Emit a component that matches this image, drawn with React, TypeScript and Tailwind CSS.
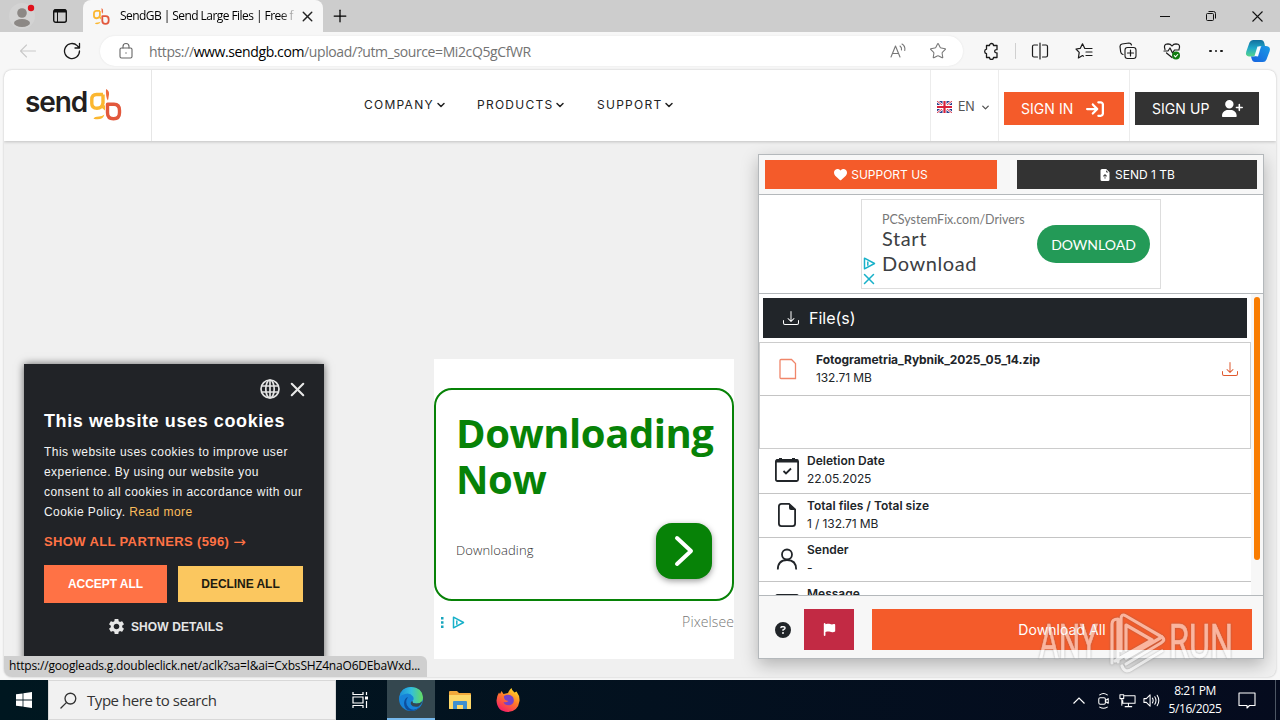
import type { ReactNode } from "react";
import { FaArrowRightToBracket, FaCircleQuestion, FaFlag, FaHeart, FaUserPlus } from "react-icons/fa6";
import { BsDownload, BsFileEarmarkArrowUpFill } from "react-icons/bs";
import { MdSettings } from "react-icons/md";
import { ChevronDown, Plus, Star, X } from "lucide-react";

const navItems = [
  { label: "COMPANY", width: "w-[113px]" },
  { label: "PRODUCTS", width: "w-[120px]" },
  { label: "SUPPORT", width: "w-[90px]" },
];

function LineIcon({ size = 18, className = "", children }: { size?: number; className?: string; children: ReactNode }) {
  return (
    <svg
      width={size}
      height={size}
      viewBox="0 0 18 18"
      fill="none"
      stroke="currentColor"
      strokeWidth="1.1"
      strokeLinecap="round"
      strokeLinejoin="round"
      className={`shrink-0 ${className}`}
    >
      {children}
    </svg>
  );
}

function DetailIcon({ children }: { children: ReactNode }) {
  return (
    <svg width="26" height="26" viewBox="0 0 26 26" fill="none" stroke="#212529" strokeWidth="1.8">
      {children}
    </svg>
  );
}

const details = [
  {
    icon: (
      <DetailIcon>
        <rect x="1.900" y="3" width="22.200" height="21" rx="1.500" />
        <path d="M2 4h22M6.500 1v4M19.500 1v4" strokeWidth="3" />
        <path d="m9.500 14 2.500 2.500 5-5" />
      </DetailIcon>
    ),
    label: "Deletion Date",
    value: "22.05.2025",
    height: "h-[45px]",
  },
  {
    icon: (
      <DetailIcon>
        <path d="M15 1.900H7.500q-2.600 0-2.600 2.600v17q0 2.600 2.600 2.600h11q2.600 0 2.600-2.600V7.500z" />
        <path d="M15 1.500 21.500 8H17q-2 0-2-2z" fill="#212529" stroke="none" />
      </DetailIcon>
    ),
    label: "Total files / Total size",
    value: "1 / 132.71 MB",
    height: "h-11",
  },
  {
    icon: (
      <DetailIcon>
        <circle cx="13" cy="8.500" r="5" />
        <path d="M3.800 23.500Q3.800 14 13 14t9.200 9.500" />
      </DetailIcon>
    ),
    label: "Sender",
    value: "-",
    height: "h-11",
  },
  {
    icon: (
      <DetailIcon>
        <rect x="1.900" y="5" width="22.200" height="17" rx="1.500" />
      </DetailIcon>
    ),
    label: "Message",
    value: "",
    height: "h-11",
  },
];

function BrandMark({ className }: { className: string }) {
  return (
    <svg viewBox="0 0 32 32" fill="none" strokeWidth="3.4" className={`shrink-0 ${className}`}>
      <path d="M13 5.500H6.500Q1.800 5.500 1.800 10.500v4Q1.800 19.300 7 19.300T13 14V5.500" stroke="#fbb731" strokeLinejoin="round" />
      <path d="M11.500 18.500 15 21.500V16z" fill="#fbb731" />
      <path d="M14.500 25.500Q12.500 32 3.500 29.800 4.500 27.500 9 27.500q3 0 5.500-2z" fill="#fbb731" />
      <path d="M16 0q3.500 1.500 3 5.500L18 11.500q-2.500-3-2-11.500z" fill="#ee6b3f" />
      <path d="M17.500 15.300v8.500q0 6 6 6t6-6v-2.300q0-6.200-5.500-6.200z" stroke="#e2583c" strokeLinejoin="round" />
    </svg>
  );
}

function AdChoices() {
  return (
    <svg width="13" height="13" viewBox="0 0 13 13" fill="none" stroke="#18b1c9" strokeWidth="1.500">
      <path d="M1.500 1.200 11.500 6.500 1.500 11.800Z" strokeLinejoin="round" />
      <path d="M4.800 4.500v4.200" />
    </svg>
  );
}

function TitleBar() {
  return (
    <div className="flex h-8 bg-[#cdcdcd]">
      <div className="flex w-11 items-center justify-center">
        <svg width="28" height="28" viewBox="0 0 28 28">
          <circle cx="14" cy="14" r="13" fill="#d3d3d3" />
          <circle cx="14" cy="11" r="4.800" fill="#8c8885" />
          <ellipse cx="14" cy="21" rx="8" ry="4" fill="#8c8885" />
          <circle cx="23" cy="6" r="3.200" fill="#e0101b" />
        </svg>
      </div>
      <div className="flex w-[39px] items-center pl-2">
        <svg width="16" height="16" viewBox="0 0 16 16" fill="none" stroke="#111">
          <rect x="1.700" y="1.700" width="12.600" height="12.600" rx="2" strokeWidth="1.400" />
          <path d="M2 3h12" strokeWidth="3" />
          <path d="M5.500 4v10" />
        </svg>
      </div>
      <div className="flex w-60 items-center rounded-t-lg bg-[#f7f7f7] pl-[10px]">
        <BrandMark className="h-[17px] w-[17px]" />
        <div className="ml-[10px] w-[174px] bg-linear-to-r from-black from-91% to-[#d0d0d0] bg-clip-text text-[12px] tracking-[-0.560px] whitespace-nowrap text-transparent">
          SendGB | Send Large Files | Free f
        </div>
        <X size={17} strokeWidth={2} className="ml-[5px] shrink-0 text-[#222]" />
      </div>
      <div className="flex w-[34px] items-center justify-center">
        <Plus size={20} strokeWidth={1.500} />
      </div>
      <div className="ml-auto flex text-[#111]">
        <div className="flex w-[46px] items-center justify-center">
          <div className="h-px w-[10px] bg-[#111]" />
        </div>
        <div className="flex w-[46px] items-center justify-center">
          <svg width="10" height="10" viewBox="0 0 10 10" fill="none" stroke="currentColor">
            <rect x=".5" y="2.500" width="7" height="7" rx="1" />
            <path d="M2.500.5h5q2 0 2 2v5" />
          </svg>
        </div>
        <div className="flex w-[46px] items-center justify-center">
          <svg width="11" height="11" viewBox="0 0 11 11" stroke="currentColor" strokeWidth="1.100">
            <path d="M.5.5l10 10M10.500.5l-10 10" />
          </svg>
        </div>
      </div>
    </div>
  );
}

function Toolbar() {
  return (
    <div className="flex h-[38px] items-center bg-[#f7f7f7] text-[#1a1a1a]">
      <div className="flex w-14 justify-center text-[#c9c9c9]">
        <LineIcon>
          <path d="M1.500 9h15M7.500 3 1.500 9l6 6" />
        </LineIcon>
      </div>
      <div className="flex w-8 justify-center">
        <LineIcon>
          <path d="M16.500 9a7.500 7.500 0 1 1-2.300-5.400L16.300 6M16.500 1.500V6H12" strokeWidth="1.300" />
        </LineIcon>
      </div>
      <div className="ml-3 flex h-[30px] w-[863px] items-center rounded-full bg-white pl-[17px] shadow-[0_0_2px_#e2e2e2]">
        <LineIcon className="text-[#666]">
          <rect x="3" y="6" width="12" height="10" rx="1.500" />
          <path d="M6 6V4.500a3 3 0 0 1 6 0V6" />
          <circle cx="9" cy="11" r=".7" fill="currentColor" stroke="none" />
        </LineIcon>
        <div className="ml-[14px] text-[14px] tracking-[-0.390px] whitespace-nowrap text-[#737373]">
          https://<span className="text-black">www.sendgb.com</span>/upload/?utm_source=Mi2cQ5gCfWR
        </div>
        <div className="ml-auto flex w-10 justify-center text-[#777]">
          <LineIcon>
            <path d="M2 15 6.500 4 11 15M3.500 11.500h6M11 4q2 1.500 1.500 4M13 2q3.500 2 2.800 6.500" />
          </LineIcon>
        </div>
        <div className="mr-[5px] flex w-10 justify-center text-[#777]">
          <Star size={18} strokeWidth={1.400} />
        </div>
      </div>
      <div className="ml-1 flex w-12 justify-center">
        <LineIcon>
          <path d="M5 3.500h2.500a2 2 0 0 1 4 0H15v4.200q-2.300-.3-2.300 1.500T15 10.800v4.700h-3.500a2 2 0 0 1-4 0H4.500v-3.800a2.300 2.300 0 0 1 0-4.500V3.500z" strokeWidth="1.300" />
        </LineIcon>
      </div>
      <div className="h-4 w-px bg-[#d0d0d0]" />
      <div className="flex w-12 justify-center">
        <LineIcon>
          <path d="M9 1v16M6.500 3H3Q1.500 3 1.500 4.500v9Q1.500 15 3 15h3.500M11.500 3H15q1.500 0 1.500 1.500v9Q16.500 15 15 15h-3.500" strokeWidth="1.200" />
        </LineIcon>
      </div>
      <div className="flex w-10 justify-center">
        <LineIcon>
          <path d="M11 6.500H9.800L7.500 1.800 5.200 6.400 1 7l3.200 3.400L3.400 16l4.100-2.400 1 .6M11 6.500h6M11 10h6M11 13.500h6" strokeWidth="1.200" />
        </LineIcon>
      </div>
      <div className="flex w-12 justify-center">
        <LineIcon>
          <rect x="6" y="5.500" width="11" height="11" rx="2.500" />
          <path d="M11.500 8v6M8.500 11h6M4 12.500Q2 12 1.700 10L1 4.500Q1 2.500 3 2l7-1q2 0 2.500 2" strokeWidth="1.200" />
        </LineIcon>
      </div>
      <div className="flex w-10 justify-center">
        <LineIcon>
          <path d="M2 7.500Q0 2 5 1.800 7.500 1.800 9 4q1.500-2.200 4-2.200Q18 2 16 7.500M3.500 11 9 15.500M1 9h4l2-3 2.500 5 2-3H16" strokeWidth="1.200" />
          <circle cx="13" cy="13.500" r="4" fill="#107c10" stroke="none" />
          <path d="m11.300 13.700 1.200 1.200 2.200-2.400" stroke="#fff" />
        </LineIcon>
      </div>
      <div className="flex w-12 items-center justify-center gap-[3px]">
        {[0, 1, 2].map((dot) => (
          <span key={dot} className="size-[2.500px] rounded-full bg-[#1a1a1a]" />
        ))}
      </div>
      <div className="flex w-9 justify-center">
        <svg width="26" height="24" viewBox="0 0 26 24">
          <defs>
            <linearGradient id="cpA" x1="0" y1="0" x2="0" y2="1">
              <stop stopColor="#126f9d" />
              <stop offset=".5" stopColor="#20a8c9" />
              <stop offset="1" stopColor="#58d58a" />
            </linearGradient>
            <linearGradient id="cpB" x1="1" y1="0" x2="0" y2="1">
              <stop stopColor="#1a9be4" />
              <stop offset="1" stopColor="#1661e0" />
            </linearGradient>
          </defs>
          <path d="M8 1h8q2.500 0 3.300 3l.7 3h-4q-2 0-2.700 2l-2 6q-.8 2.500-3.300 2.500H4Q0 17 1.300 12.500L4.500 3.500Q5.500 1 8 1z" fill="url(#cpA)" />
          <path d="M18 23h-8q-2.500 0-3.300-3L6 17.500h3q2 0 2.700-2l2-6q.8-2.500 3.300-2.500H21q5 .5 3.700 5L21.500 20.500Q20.500 23 18 23z" fill="url(#cpB)" />
          <path d="m12.500 7.500-3 9.500 3.500.5 3-10z" fill="#f5faff" />
        </svg>
      </div>
    </div>
  );
}

function UkFlag() {
  return (
    <svg width="15" height="12" viewBox="0 0 15 12">
      <rect width="15" height="12" rx="1" fill="#2b3f8c" />
      <path d="M0 0l15 12M15 0 0 12" stroke="#fff" strokeWidth="2.400" />
      <path d="M0 0l15 12M15 0 0 12" stroke="#d8203a" strokeWidth=".9" />
      <path d="M7.500 0v12M0 6h15" stroke="#fff" strokeWidth="4" />
      <path d="M7.500 0v12M0 6h15" stroke="#d8203a" strokeWidth="2.200" />
    </svg>
  );
}

function Header() {
  return (
    <header className="relative flex h-[71px] shrink-0 bg-white font-['Inter',sans-serif] shadow-[0_1px_3px_rgba(0,0,0,0.200)]">
      <div className="flex w-[148px] border-r border-[#e6e6e6] pt-[19px] pl-[21px]">
        <span className="mt-[-4px] w-[65px] text-[28px] leading-[34px] font-semibold tracking-[-1.100px] text-[#231f20]">
          send
        </span>
        <BrandMark className="h-8 w-8" />
      </div>
      <nav className="ml-[212px] flex h-[70px] items-center text-[12px] tracking-[1.260px] text-[#222]">
        {navItems.map((item) => (
          <a key={item.label} className={`flex shrink-0 items-center ${item.width}`}>
            {item.label}
            <ChevronDown size={12} strokeWidth={3} className="ml-[1px]" />
          </a>
        ))}
      </nav>
      <div className="ml-auto flex">
        <div className="flex w-[69px] items-center border-x border-[#ececec] pt-[3px] pl-[6px] text-[12.500px] tracking-[-0.200px] text-[#555]">
          <UkFlag />
          <span className="ml-[6px] pt-px">EN</span>
          <ChevronDown size={11} strokeWidth={3} className="ml-[5px]" />
        </div>
        <div className="flex w-[131px] border-r border-[#ececec] pt-[22px] pl-[5px] text-[14px] tracking-[0.050px] text-white">
          <a className="flex h-[33px] w-[120px] items-center bg-[#f45b2a] pl-[17px] word-spacing-[2px]">
            SIGN IN
            <FaArrowRightToBracket size={18} className="ml-[13px]" />
          </a>
        </div>
        <div className="w-[146px] pt-[22px] pl-[5px] text-[14px] tracking-[0.050px] text-white">
          <a className="flex h-[33px] w-[124px] items-center bg-[#333] pl-[17px]">
            SIGN UP
            <FaUserPlus size={21} className="ml-[13px]" />
          </a>
        </div>
      </div>
    </header>
  );
}

function CookieDialog() {
  return (
    <div className="absolute top-[294px] left-5 h-[300px] w-[300px] bg-[#212327] px-5 pt-[14px] font-['Liberation_Sans',sans-serif] text-white shadow-[0_0_8px_rgba(0,0,0,0.600)]">
      <div className="flex h-[22px] items-center justify-end gap-[5px] pr-[-5px]">
        <svg width="22" height="22" viewBox="0 0 22 22" fill="none" stroke="#e3e3e3" strokeWidth="1.700">
          <circle cx="11" cy="11" r="9" />
          <ellipse cx="11" cy="11" rx="4.200" ry="9" />
          <path d="M11 2v18M3 8h16M3 14h16" />
        </svg>
        <X size={23} strokeWidth={2.200} className="-mr-[5px] text-[#e8e8e8]" />
      </div>
      <h2 className="mt-[8px] text-[18px] leading-[26px] font-bold tracking-[0.600px] whitespace-nowrap">
        This website uses cookies
      </h2>
      <p className="mt-2 text-[12px] leading-5 tracking-[0.450px] whitespace-nowrap text-[#f3f3f3]">
        This website uses cookies to improve user
        <br />
        experience. By using our website you
        <br />
        consent to all cookies in accordance with our
        <br />
        Cookie Policy. <a className="text-[#fbbd5c]">Read more</a>
      </p>
      <p className="mt-[10px] flex text-[13px] leading-5 font-bold tracking-[0.370px] whitespace-nowrap text-[#ff7245]">
        SHOW ALL PARTNERS (596)
        <span className="ml-1 font-['DejaVu_Sans',sans-serif] text-[15px] font-normal">→</span>
      </p>
      <div className="mt-[13px] flex items-center gap-[11px] text-[12px] font-bold tracking-[-0.050px]">
        <button className="h-[38px] w-[123px] bg-[#ff7245]">ACCEPT ALL</button>
        <button className="h-9 w-[125px] bg-[#fbc75f] text-[#211b10]">DECLINE ALL</button>
      </div>
      <div className="mt-[14px] flex items-center pl-[63px] text-[12px] font-bold tracking-[0.100px] text-[#e6e6e6]">
        <MdSettings size={19} />
        <span className="ml-[5px]">SHOW DETAILS</span>
      </div>
    </div>
  );
}

function SquareAd() {
  return (
    <section className="mt-[218px] ml-[430px] h-[300px] w-[300px] shrink-0 bg-white pt-[29px] font-['Open_Sans',sans-serif]">
      <div className="flex h-[213px] flex-col justify-between rounded-[18px] border-2 border-[#078207] pt-5 pr-[18px] pb-5 pl-5">
        <h1 className="text-[40px] leading-[46px] font-bold tracking-[-0.450px] text-[#078207]">
          Downloading
          <br />
          Now
        </h1>
        <div className="flex items-center justify-between pr-[2px]">
          <span className="text-[13px] font-light tracking-[0.100px] text-[#333]">Downloading</span>
          <div className="flex size-14 items-center justify-center rounded-2xl bg-[#078207] shadow-[0_2px_6px_rgba(0,0,0,0.400)]">
            <svg width="20" height="32" viewBox="0 0 20 32" fill="none" stroke="#fff" strokeWidth="4" strokeLinecap="round" strokeLinejoin="round">
              <path d="M3 3 17 16 3 29" />
            </svg>
          </div>
        </div>
      </div>
      <div className="mt-[11px] flex items-center">
        <svg width="16" height="13" viewBox="0 0 16 13" fill="#18a5bd">
          <path d="M7 1h2.500v2.500H7zM7 5.300h2.500v2.500H7zM7 9.600h2.500v2.500H7z" />
        </svg>
        <div className="ml-[2px]">
          <AdChoices />
        </div>
        <span className="ml-auto text-[14px] leading-5 font-light tracking-[0.100px] text-[#777]">Pixelsee</span>
      </div>
    </section>
  );
}

function FilePanel() {
  return (
    <section className="mt-[13px] ml-6 flex h-[505px] w-[506px] shrink-0 flex-col border border-[#b4b8bb] bg-white font-['Inter',sans-serif] text-[#212529] shadow-[0_6px_16px_rgba(0,0,0,0.250)]">
      <div className="flex h-10 shrink-0 justify-between border-b border-[#b4b8bb] bg-[#f7f7f7] px-[6px] pt-[5px] text-[12px] text-white">
        <a className="flex h-[29px] w-[232px] items-center justify-center gap-1 bg-[#f45b2a]">
          <FaHeart size={13} />
          SUPPORT US
        </a>
        <a className="flex h-[29px] w-60 items-center justify-center gap-1 bg-[#333]">
          <BsFileEarmarkArrowUpFill size={12} />
          SEND 1 TB
        </a>
      </div>
      <div className="flex h-[99px] shrink-0 border-b border-[#b4b8bb] pt-1 pl-[102px]">
        <div className="flex h-[90px] w-[300px] border border-[#ddd]">
          <div className="flex w-5 flex-col items-center justify-end pr-[6px]">
            <AdChoices />
            <X size={18} strokeWidth={2} className="text-[#18b1c9]" />
          </div>
          <div className="w-[155px] pt-[12px] font-['Lato',sans-serif] whitespace-nowrap">
            <p className="text-[12.500px] leading-4 tracking-[-0.020px] text-[#777]">PCSystemFix.com/Drivers</p>
            <p className="-mt-[2px] text-[20px] leading-[25px] tracking-[0.600px] text-[#3c4043]">
              Start
              <br />
              Download
            </p>
          </div>
          <div className="mt-[25px] flex h-[38px] w-[113px] items-center justify-center rounded-full bg-[#239a57] font-['Lato',sans-serif] text-[14px] text-white">
            DOWNLOAD
          </div>
        </div>
      </div>
      <div className="flex min-h-0 flex-1 overflow-hidden">
        <div className="w-[492px] shrink-0">
          <div className="mt-1 ml-1 flex h-10 w-[484px] items-center bg-[#212529] pl-5 text-[16px] text-white">
            <BsDownload size={16} />
            <span className="ml-[10px]">File(s)</span>
          </div>
          <div className="mt-1 border border-[#ccc]">
            <div className="flex h-[53px] items-center border-b border-[#c4c4c4] pr-3 pl-[19px] text-[12px] leading-[18px]">
              <svg width="18" height="22" viewBox="0 0 18 22" fill="none" stroke="#f0866a" strokeWidth="1.300">
                <path d="M2 1.500h10.500l4 4V20.500H2q-1 0-1-1v-17q0-1 1-1z" />
              </svg>
              <div className="ml-[19px]">
                <p className="font-bold tracking-[-0.050px]">Fotogrametria_Rybnik_2025_05_14.zip</p>
                <p className="tracking-[-0.100px]">132.71 MB</p>
              </div>
              <BsDownload size={16} className="ml-auto text-[#e0592e]" />
            </div>
            <div className="h-[52px]" />
          </div>
          {details.map((row) => (
            <div key={row.label} className={`flex border-b border-[#c4c4c4] pt-[3px] ${row.height}`}>
              <div className="flex w-12 justify-center pt-[5px] pl-2">{row.icon}</div>
              <div className="text-[12px] leading-[18px]">
                <p className="font-semibold">{row.label}</p>
                <p className="tracking-[-0.100px]">{row.value}</p>
              </div>
            </div>
          ))}
        </div>
        <div className="flex-1 bg-[#f7f7f7] pt-[3px] pl-[3px]">
          <div className="h-[263px] w-[6px] rounded-full bg-[#f97c00]" />
        </div>
      </div>
      <div className="flex h-[63px] shrink-0 items-center border-t border-[#b4b8bb] bg-[#f7f7f7] pt-[5px] pl-4 text-white">
        <FaCircleQuestion size={16} className="text-[#212529]" />
        <a className="ml-[13px] flex h-[41px] w-[50px] items-center justify-center bg-[#c22a44]">
          <FaFlag size={13} />
        </a>
        <a className="ml-[18px] flex h-[41px] w-[380px] items-center justify-center bg-[#f45b2a] text-[14px] tracking-[0.050px]">
          Download All
        </a>
      </div>
    </section>
  );
}

function Watermark() {
  return (
    <svg
      width="204"
      height="70"
      viewBox="0 0 204 70"
      className="absolute top-[606px] left-[1034px] opacity-55 drop-shadow-[0_0_1px_rgba(90,90,90,0.800)]"
      fill="#fff"
      stroke="#fff"
    >
      <text x="5" y="52" fontFamily="Roboto, sans-serif" fontSize="49" strokeWidth=".6" textLength="59" lengthAdjust="spacingAndGlyphs">
        ANY
      </text>
      <text x="135" y="52" fontFamily="Roboto, sans-serif" fontSize="49" strokeWidth=".6" textLength="64" lengthAdjust="spacingAndGlyphs">
        RUN
      </text>
      <g fill="none" strokeWidth="3.200" strokeLinejoin="round" strokeLinecap="round">
        <path d="M78 57V18q0-5 6-5v43M87 45V13q0-6 5-3l36 21q4 3-1 6L92 58" />
        <path d="M92 44V19l26 15-37 21M92 52l36-21M88 60q3 8 10 3l30-18" />
      </g>
    </svg>
  );
}

function Taskbar() {
  return (
    <div className="flex h-10 shrink-0 bg-linear-to-r from-[#001720] to-[#050b1e] text-white">
      <div className="flex w-12 items-center justify-center">
        <svg width="16" height="16" viewBox="0 0 16 16" fill="#fff">
          <path d="M0 2.300 6.600 1.400v6.200H0zM7.400 1.300 16 0v7.600H7.400zM0 8.400h6.600v6.200L0 13.700zM7.400 8.400H16V16l-8.600-1.300z" />
        </svg>
      </div>
      <div className="flex w-72 items-center border border-[#d8d8d8] bg-[#f1f1f1] pl-[11px] text-[#333]">
        <LineIcon size={17}>
          <circle cx="11" cy="7" r="5.700" strokeWidth="1.400" />
          <path d="M7 11 1 17" strokeWidth="1.400" />
        </LineIcon>
        <span className="ml-[10px] text-[15px] tracking-[-0.450px]">Type here to search</span>
      </div>
      <div className="flex w-[51px] items-center justify-center pr-[3px]">
        <svg width="17" height="16" viewBox="0 0 17 16" fill="none" stroke="#fff" strokeWidth="1.200">
          <path d="M1 0v2.500h10V0M1 16v-2.500h10V16M1 5h10v6H1zM14.500 0v3M14.500 9v7" />
          <path d="M14.500 4.500v3" strokeWidth="3" />
        </svg>
      </div>
      <div className="flex w-12 items-center justify-center border-b-2 border-[#76b9ed] bg-[#34474f]">
        <svg width="24" height="24" viewBox="0 0 24 24">
          <defs>
            <linearGradient id="edgeTop" x1="0" y1=".5" x2="1" y2=".5">
              <stop stopColor="#1b8fd8" />
              <stop offset=".5" stopColor="#33bfdc" />
              <stop offset="1" stopColor="#66dc5c" />
            </linearGradient>
          </defs>
          <circle cx="12" cy="12" r="12" fill="#1783d8" />
          <path d="M.5 10Q2 0 12 0q11 0 12 10.500 0 6-6.500 6-4.500 0-4-2.500 2-2 .5-4.500Q11 5.500 6 7 2 8 .5 10z" fill="url(#edgeTop)" />
          <path d="M9 10q-4 6 1 11 5 4 11-1.500Q17 24 12 24 5 23 5 16q.5-5 4-6z" fill="#0d4f9e" />
          <path d="M13.500 14q-.5 2.500 4 2.500 3.500 0 6-2.500-1 4-4 5.500-6 1-7.500-2-1-3 1.500-3.500z" fill="#34474f" />
        </svg>
      </div>
      <div className="flex w-[49px] items-center justify-center">
        <svg width="22" height="19" viewBox="0 0 22 19">
          <path d="M0 1q0-1 1-1h7l2 2h11q1 0 1 1v15H0z" fill="#f2a93b" />
          <path d="M0 4h22v13q0 1-1 1H1q-1 0-1-1z" fill="#fdd869" />
          <path d="M4 18v-7q0-1 1-1h12q1 0 1 1v7h-4v-4H8v4z" fill="#3f8fd0" />
        </svg>
      </div>
      <div className="flex w-12 items-center justify-center">
        <svg width="24" height="24" viewBox="0 0 24 24">
          <defs>
            <linearGradient id="fox" x1=".8" y1="0" x2=".2" y2="1">
              <stop stopColor="#ffe226" />
              <stop offset=".45" stopColor="#ff7b29" />
              <stop offset="1" stopColor="#f5156c" />
            </linearGradient>
          </defs>
          <path d="M3 4.500 4 6l1.500-3L7.500 6 12 5Q13 2 15.500 0q0 2 3 4.500l2-1Q24 8 23.500 13 22 23.500 12 24 1 23.500.5 12.500.7 8 3 4.500z" fill="url(#fox)" />
          <path d="M8 8q5-3 9 1 2.500 6-2.500 8-5.500 1-7-3 3 .8 5-1-5 0-4.500-5z" fill="#7542c9" />
        </svg>
      </div>
      <div className="ml-auto flex items-center">
        <div className="flex w-6 justify-center">
          <svg width="12" height="7" viewBox="0 0 12 7" fill="none" stroke="#fff" strokeWidth="1.200">
            <path d="M.5 6.500 6 1l5.500 5.500" />
          </svg>
        </div>
        <div className="flex w-6 justify-center">
          <LineIcon size={17}>
            <rect x="4" y="6" width="7" height="7" rx="1.500" />
            <path d="m11 9 3-2v5l-3-2M5 3q4-3 8 0M5 16q4 2.500 8 0" />
          </LineIcon>
        </div>
        <div className="flex w-6 justify-center">
          <LineIcon size={17}>
            <path d="M6 4h11v8H4V9M10 12v3M6.500 15.500h7M1 3h4v4H1zM3 7v7" />
          </LineIcon>
        </div>
        <div className="flex w-6 justify-center">
          <LineIcon size={17}>
            <path d="M1 7h2.500L7.500 3v12l-4-4H1zM10 6.500q1.500 2.500 0 5M12.500 5q2.500 4 0 8M15 3.500q3.500 5.500 0 11" />
          </LineIcon>
        </div>
        <div className="w-16 text-center text-[12px] leading-[18px] tracking-[-0.450px] whitespace-nowrap">
          <p>8:21 PM</p>
          <p>5/16/2025</p>
        </div>
        <div className="flex w-10 justify-center">
          <LineIcon>
            <path d="M1 2h16v12.500h-5.500L9 17v-2.500H1z" />
          </LineIcon>
        </div>
        <div className="ml-[8px] h-10 w-[5px] border-l border-[#4d5664]" />
      </div>
    </div>
  );
}

export default function App() {
  return (
    <div className="relative flex h-[720px] w-[1280px] flex-col overflow-hidden bg-[#f7f7f7] font-['Open_Sans','Noto_Sans',sans-serif]">
      <TitleBar />
      <Toolbar />
      <div className="relative mx-1 mb-[3px] flex min-h-0 flex-1 flex-col overflow-hidden rounded-lg bg-[#f0f0f0] shadow-[0_0_2px_#b5b5b5]">
        <Header />
        <main className="flex items-start">
          <SquareAd />
          <FilePanel />
        </main>
        <CookieDialog />
        <div className="absolute bottom-0 left-0 h-[21px] w-[423px] rounded-tr-md bg-[#cfcfcf] pl-[5px] text-[12px] leading-5 tracking-[-0.180px] whitespace-nowrap text-black">
          https://googleads.g.doubleclick.net/aclk?sa=l&amp;ai=CxbsSHZ4naO6DEbaWxd...
        </div>
      </div>
      <Taskbar />
      <Watermark />
    </div>
  );
}
